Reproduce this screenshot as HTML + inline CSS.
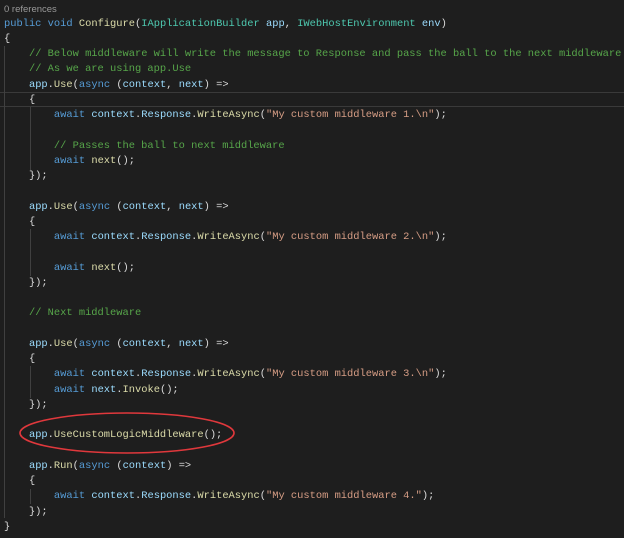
<!DOCTYPE html>
<html><head><meta charset="utf-8"><style>
html,body{margin:0;padding:0;background:#1e1e1e;width:624px;height:538px;overflow:hidden;position:relative}
pre{position:absolute;left:4px;top:16.5px;margin:0;font-family:"Liberation Mono",monospace;font-size:10.4px;line-height:15.25px;color:#dcdcdc;white-space:pre}
.k{color:#569cd6}.t{color:#4ec9b0}.f{color:#dcdcaa}.v{color:#9cdcfe}.s{color:#d69d85}.c{color:#57a64a}
.ref{position:absolute;left:4px;top:4px;font-family:"Liberation Sans",sans-serif;font-size:9.5px;color:#999}
.hl{position:absolute;left:0;top:92px;width:624px;height:13px;border-top:1px solid #3a3a3a;border-bottom:1px solid #3a3a3a}
.g{position:absolute;width:1px;background:#404040}
</style></head><body>
<div class="hl"></div>
<div class="g" style="left:4px;top:46px;height:472px"></div>
<div class="g" style="left:30px;top:107px;height:63px"></div>
<div class="g" style="left:30px;top:229px;height:47px"></div>
<div class="g" style="left:30px;top:366px;height:32px"></div>
<div class="g" style="left:30px;top:489px;height:15px"></div>
<div class="ref">0 references</div>
<pre><span class="k">public</span> <span class="k">void</span> <span class="f">Configure</span>(<span class="t">IApplicationBuilder</span> <span class="v">app</span>, <span class="t">IWebHostEnvironment</span> <span class="v">env</span>)
{
    <span class="c">// Below middleware will write the message to Response and pass the ball to the next middleware</span>
    <span class="c">// As we are using app.Use</span>
    <span class="v">app</span>.<span class="f">Use</span>(<span class="k">async</span> (<span class="v">context</span>, <span class="v">next</span>) =&gt;
    {
        <span class="k">await</span> <span class="v">context</span>.<span class="v">Response</span>.<span class="f">WriteAsync</span>(<span class="s">"My custom middleware 1.\n"</span>);

        <span class="c">// Passes the ball to next middleware</span>
        <span class="k">await</span> <span class="f">next</span>();
    });

    <span class="v">app</span>.<span class="f">Use</span>(<span class="k">async</span> (<span class="v">context</span>, <span class="v">next</span>) =&gt;
    {
        <span class="k">await</span> <span class="v">context</span>.<span class="v">Response</span>.<span class="f">WriteAsync</span>(<span class="s">"My custom middleware 2.\n"</span>);

        <span class="k">await</span> <span class="f">next</span>();
    });

    <span class="c">// Next middleware</span>

    <span class="v">app</span>.<span class="f">Use</span>(<span class="k">async</span> (<span class="v">context</span>, <span class="v">next</span>) =&gt;
    {
        <span class="k">await</span> <span class="v">context</span>.<span class="v">Response</span>.<span class="f">WriteAsync</span>(<span class="s">"My custom middleware 3.\n"</span>);
        <span class="k">await</span> <span class="v">next</span>.<span class="f">Invoke</span>();
    });

    <span class="v">app</span>.<span class="f">UseCustomLogicMiddleware</span>();

    <span class="v">app</span>.<span class="f">Run</span>(<span class="k">async</span> (<span class="v">context</span>) =&gt;
    {
        <span class="k">await</span> <span class="v">context</span>.<span class="v">Response</span>.<span class="f">WriteAsync</span>(<span class="s">"My custom middleware 4."</span>);
    });
}</pre>
<svg style="position:absolute;left:0;top:0" width="624" height="538"><ellipse cx="127" cy="433" rx="107" ry="20" fill="none" stroke="#e0383c" stroke-width="1.6"/></svg>
</body></html>
